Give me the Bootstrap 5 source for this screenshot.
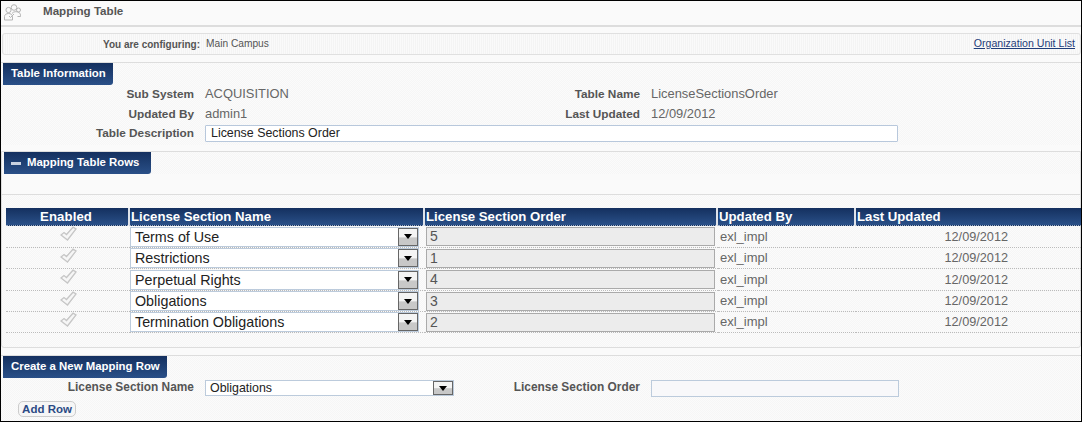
<!DOCTYPE html>
<html lang="en">
<head>
<meta charset="utf-8">
<title>Mapping Table</title>
<link rel="stylesheet" href="https://cdn.jsdelivr.net/npm/bootstrap@5.3.0/dist/css/bootstrap.min.css">
<style>
html,body{height:100%;}
body{background:#fafafa;font-family:"Liberation Sans",Arial,sans-serif;color:#555;font-size:12px;overflow:hidden;}
.frame{width:1082px;height:422px;border:1px solid #000;background:#fafafa;overflow:hidden;}
.page-head{height:24px;border-bottom:2px solid #ddd;box-sizing:content-box;}
.head-icon{width:20px;height:20px;margin:0 0 0 2px;}
.head-title{font-size:11.6px;font-weight:700;color:#555;margin-left:20px;margin-top:-4px;}
.dither{background-color:#f9f9f9;background-image:repeating-conic-gradient(#f6f6f6 0 25%,#fbfbfb 0 50%);background-size:2px 2px;}
.stripes{background:repeating-linear-gradient(90deg,#f4f4f4 0 1px,#fafafa 1px 2px);}
.config-bar{margin:6px 0 0 1px;height:22px;border:1px solid #e0e0e0;border-radius:3px;padding:0 5px 0 0;}
.config-label{width:197px;text-align:right;font-size:10px;font-weight:700;color:#555;}
.config-value{font-size:10.2px;color:#555;margin-left:6px;}
.org-link{font-size:10.6px;color:#1f3d7a;text-decoration:underline;}
.panel-line{border-top:1px solid #ddd;}
.sec-tab{display:block;width:fit-content;height:22px;line-height:21px;margin-left:2px;padding:0 7px 0 8px;color:#fff;font-size:11.4px;font-weight:700;background:linear-gradient(#14305f,#2a5088);border-radius:0 0 3px 0;}
.sec-tab.wide{padding-left:23px;padding-right:12px;position:relative;}
.minus{position:absolute;left:7px;top:10px;width:10px;height:3px;background:#c9d2e0;}
.info-section{margin-top:7px;height:83px;}
.info-grid{display:grid;grid-template-columns:193px 362px 84px 1fr;row-gap:3.5px;margin-top:1px;}
.lab{text-align:right;font-weight:700;font-size:11.8px;color:#555;line-height:16px;}
.val{padding-left:11px;font-size:12.9px;color:#666;line-height:16px;}
.desc-input{grid-column:2 / 5;margin-left:11px;width:693px;height:17px;border:1px solid #b8c8dc;border-radius:1px;background:#fff;font-size:12.4px;line-height:15px;padding:0 5px;color:#222;}
.map-section{margin-top:6px;}
.band{height:20px;border-bottom:1px solid #ddd;box-sizing:content-box;background:#fafafa;}
.map-table{table-layout:fixed;width:1077px;margin:13px 0 0 4px;border-collapse:separate;border-spacing:0;}
.map-table th{height:17px;padding:0 0 0 1px;background:linear-gradient(#14305f,#2a5088);color:#fff;font-size:13.2px;font-weight:700;line-height:17px;border-right:2px solid #dfe3ea;border-bottom:1px dotted #9fb0c8;white-space:nowrap;}
.map-table th:first-child{padding:0 2px 0 0;letter-spacing:.1px;}
.map-table th:last-child{border-right:0;}
.map-table td{padding:0;border-bottom:1px dotted #bbb;vertical-align:middle;font-size:13px;color:#666;line-height:14px;}
.map-table tr:nth-child(odd) td{height:22px;}
.map-table tr:nth-child(even) td,.map-table tr:last-child td{height:21px;}
.td-name{padding-right:2px !important;}
.sel-box{display:flex;align-items:center;height:20px;width:289px;border:1px solid #bccbdc;background:#fff;color:#222;font-size:14.3px;padding-left:4px;}
.sel-box span:first-child{flex:1;}
.sel-btn{flex:none;width:20px;height:18px;border:1px solid #666;background:linear-gradient(#f4f4f4 50%,#c8c8c8 55%);display:flex;align-items:center;justify-content:center;}
.sel-btn::after{content:"";border:4.5px solid transparent;border-top:5px solid #000;border-bottom:0;}
.ord-box{height:19px;width:289px;margin-left:1px;border:1px solid #aaa;background:#ececec;font-size:14px;line-height:17px;padding-left:3px;color:#555;}
.chk{display:block;margin:-6px auto 0;width:17px;height:15px;}
.td-by{padding-left:2px !important;}
.td-date{text-align:right;padding-right:75px !important;font-size:12.7px !important;}
.create{margin-top:7px;height:70px;}
.create-grid{display:grid;grid-template-columns:193px 261px 185px 1fr;align-items:start;margin-top:2px;}
.create-grid .lab{line-height:14px;font-size:11.9px;}
.sel-small{margin-left:11px;width:249px;height:16px;display:flex;align-items:center;border:1px solid #bccbdc;background:#fff;color:#222;font-size:12.4px;padding-left:4px;}
.sel-small span:first-child{flex:1;}
.sel-small .sel-btn{height:14px;width:20px;}
.txt-small{margin-left:11px;width:248px;height:17px;border:1px solid #bccbdc;background:#f8f8fa;}
.add-btn{display:block;margin:4px 0 0 17px;width:58px;height:16px;border:1px solid #ccc;border-radius:5px;background:#f6f6f6;color:#2b4a85;font-size:11.5px;font-weight:700;line-height:14px;padding:0;text-align:center;}
.box-end{border-bottom:1px solid #ddd;border-left:1px solid #ddd;border-right:1px solid #ddd;border-radius:0 0 3px 3px;}
.table-tail{height:14px;}
</style>
</head>
<body>
<div class="frame">
  <header class="page-head d-flex align-items-center">
    <svg class="head-icon" viewBox="0 0 20 20" fill="none" stroke="#b5b5b5" stroke-width="1">
      <circle cx="11" cy="4.5" r="2.8"/><circle cx="5.5" cy="7" r="2.6"/><circle cx="15.5" cy="7" r="2"/>
      <path d="M1.5 17v-3.5c0-2 2-3 4-3s4 1 4 3V17z"/><path d="M9 10.5c1-2 5-2.500 7-1 1.500 1 1.500 2 1.500 4h-3"/><path d="M6 13l1.500 1.500L11 11"/>
    </svg>
    <div class="head-title">Mapping Table</div>
  </header>

  <div class="config-bar stripes d-flex align-items-center">
    <div class="config-label">You are configuring:</div>
    <div class="config-value flex-grow-1">Main Campus</div>
    <a class="org-link" href="#">Organization Unit List</a>
  </div>

  <section class="info-section panel-line dither">
    <div class="sec-tab">Table Information</div>
    <div class="info-grid">
      <div class="lab">Sub System</div><div class="val">ACQUISITION</div><div class="lab">Table Name</div><div class="val">LicenseSectionsOrder</div>
      <div class="lab">Updated By</div><div class="val">admin1</div><div class="lab">Last Updated</div><div class="val">12/09/2012</div>
      <div class="lab">Table Description</div><div class="desc-input">License Sections Order</div>
    </div>
  </section>

  <section class="map-section panel-line dither box-end">
    <div class="sec-tab wide"><span class="minus"></span>Mapping Table Rows</div>
    <div class="band"></div>
    <table class="map-table">
      <colgroup><col style="width:124px"><col style="width:295px"><col style="width:293px"><col style="width:138px"><col></colgroup>
      <thead><tr><th class="text-center">Enabled</th><th>License Section Name</th><th>License Section Order</th><th>Updated By</th><th>Last Updated</th></tr></thead>
      <tbody id="rows"></tbody>
    </table>
    <div class="table-tail"></div>
  </section>

  <section class="create panel-line dither">
    <div class="sec-tab">Create a New Mapping Row</div>
    <div class="create-grid">
      <div class="lab">License Section Name</div>
      <div class="sel-small"><span>Obligations</span><span class="sel-btn"></span></div>
      <div class="lab">License Section Order</div>
      <div class="txt-small"></div>
    </div>
    <button class="add-btn" type="button">Add Row</button>
  </section>
</div>
<script>
const data=[["Terms of Use","5"],["Restrictions","1"],["Perpetual Rights","4"],["Obligations","3"],["Termination Obligations","2"]];
document.getElementById('rows').innerHTML=data.map(d=>`<tr>
<td><svg class="chk" viewBox="0 0 17 15" fill="#f6f6f6" stroke="#c6c6c6" stroke-width="1.300"><path d="M1 9l3-2.500 2.500 2L13 1.200l3 1.800-8.500 11z"/></svg></td>
<td class="td-name"><div class="sel-box"><span>${d[0]}</span><span class="sel-btn"></span></div></td>
<td><div class="ord-box">${d[1]}</div></td>
<td class="td-by">exl_impl</td>
<td class="td-date">12/09/2012</td></tr>`).join('');
</script>
<script src="https://cdn.jsdelivr.net/npm/bootstrap@5.3.0/dist/js/bootstrap.bundle.min.js"></script>
</body>
</html>
